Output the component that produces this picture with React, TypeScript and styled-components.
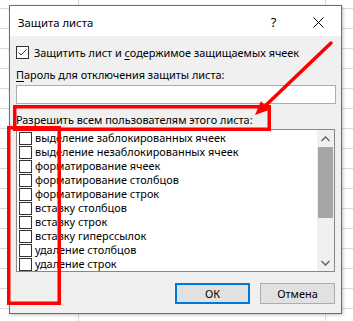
import React from "react";
import styled, { createGlobalStyle } from "styled-components";

const FONT = `"Noto Sans", "Open Sans", sans-serif`;

const GlobalStyle = createGlobalStyle`
  html, body { margin: 0; padding: 0; background: #fff; }
  body { font-family: ${FONT}; }
`;

const Page = styled.div`
  position: relative;
  width: 353px;
  height: 321px;
  overflow: hidden;
  box-sizing: border-box;
  padding: 5px 0 0 9px;
  background-color: #fff;
  background-image:
    linear-gradient(to right, transparent 78px, #d9d9d9 78px, #d9d9d9 79px, transparent 79px),
    linear-gradient(to right, transparent 325px, #d9d9d9 325px, #d9d9d9 326px, transparent 326px),
    repeating-linear-gradient(to bottom, transparent 0, transparent 8px, #d9d9d9 8px, #d9d9d9 9px, transparent 9px, transparent 20px);
  font-family: ${FONT};
  font-size: 10.9px;
  color: #000;
`;

const Dialog = styled.div`
  width: 333px;
  height: 309px;
  box-sizing: border-box;
  border: 1px solid #6f6f6f;
  box-shadow: 1px 1px 3px rgba(0, 0, 0, 0.25);
  background: #f0f0f0;
  display: flex;
  flex-direction: column;
`;

const TitleBar = styled.div`
  height: 30px;
  flex: none;
  background: #fff;
  display: flex;
  align-items: center;
  box-sizing: border-box;
  padding: 2px 0 0 8px;
`;

const Title = styled.div`
  flex: 1;
  font-size: 11.3px;
`;

const CaptionButton = styled.div`
  width: 45px;
  height: 100%;
  display: flex;
  align-items: center;
  justify-content: center;
  font-size: 13px;
  color: #000;
`;

const Body = styled.div`
  flex: 1;
  display: flex;
  flex-direction: column;
  padding: 0 5px 0 6px;
`;

const CheckRow = styled.label`
  display: flex;
  align-items: center;
  height: 13px;
  line-height: 13px;
  margin-top: 10px;
  gap: 5px;
  white-space: nowrap;
`;

const Box = styled.span`
  flex: none;
  width: 13px;
  height: 13px;
  box-sizing: border-box;
  border: 1px solid #333;
  background: #fff;
  display: flex;
  align-items: center;
  justify-content: center;
`;

const Label = styled.div<{ $top: number }>`
  height: 16px;
  line-height: 16px;
  margin-top: ${(p) => p.$top}px;
  white-space: nowrap;
`;

const U = styled.span`
  text-decoration: underline;
  text-underline-offset: 2px;
`;

const Input = styled.div`
  height: 19px;
  width: 320px;
  box-sizing: border-box;
  margin-top: 2px;
  border: 1px solid #abadb3;
  background: #fff;
`;

const List = styled.div`
  margin-top: 1px;
  width: 319px;
  height: 143px;
  box-sizing: border-box;
  border: 1px solid #828790;
  background: #fff;
  display: flex;
`;

const Rows = styled.div`
  flex: 1;
  padding-top: 1px;
  display: flex;
  flex-direction: column;
`;

const Row = styled.div`
  height: 14px;
  line-height: 14px;
  display: flex;
  align-items: center;
  padding-left: 2px;
  gap: 3px;
  white-space: nowrap;
`;

const Scrollbar = styled.div`
  width: 17px;
  flex: none;
  background: #f0f0f0;
  display: flex;
  flex-direction: column;
`;

const ScrollArrow = styled.div`
  height: 17px;
  flex: none;
  display: flex;
  align-items: center;
  justify-content: center;
`;

const Thumb = styled.div`
  height: 71px;
  flex: none;
  margin: 0 1px;
  background: #a6a6a6;
`;

const Track = styled.div`
  flex: 1;
`;

const Buttons = styled.div`
  margin-top: 11px;
  display: flex;
  justify-content: flex-end;
  gap: 10px;
  padding-right: 1px;
`;

const Button = styled.div<{ $default?: boolean }>`
  width: 75px;
  height: 21px;
  box-sizing: border-box;
  background: #e1e1e1;
  border: ${(p) => (p.$default ? "2px solid #0078d7" : "1px solid #adadad")};
  display: flex;
  align-items: center;
  justify-content: center;
  font-size: 10.9px;
`;

const Overlay = styled.svg`
  position: absolute;
  left: 0;
  top: 0;
  pointer-events: none;
`;

const items = [
  "выделение заблокированных ячеек",
  "выделение незаблокированных ячеек",
  "форматирование ячеек",
  "форматирование столбцов",
  "форматирование строк",
  "вставку столбцов",
  "вставку строк",
  "вставку гиперссылок",
  "удаление столбцов",
  "удаление строк",
];

export default function App() {
  return (
    <>
      <GlobalStyle />
      <Page>
        <Dialog>
          <TitleBar>
            <Title>Защита листа</Title>
            <CaptionButton>?</CaptionButton>
            <CaptionButton>
              <svg width="11" height="11" viewBox="0 0 11 11">
                <path d="M0.5 0.5 L10.5 10.5 M10.5 0.5 L0.5 10.5" stroke="#000" strokeWidth="1" />
              </svg>
            </CaptionButton>
          </TitleBar>
          <Body>
            <CheckRow>
              <Box>
                <svg width="11" height="11" viewBox="0 0 11 11">
                  <polyline points="1.5,5.5 4,8 9.5,2.5" fill="none" stroke="#333" strokeWidth="1" />
                </svg>
              </Box>
              <span>
                Защитить лист и <U>с</U>одержимое защищаемых ячеек
              </span>
            </CheckRow>
            <Label $top={8}>
              <U>П</U>ароль для отключения защиты листа:
            </Label>
            <Input />
            <Label $top={8}>
              Разре<U>ш</U>ить всем пользователям этого листа:
            </Label>
            <List>
              <Rows>
                {items.map((t) => (
                  <Row key={t}>
                    <Box />
                    <span>{t}</span>
                  </Row>
                ))}
              </Rows>
              <Scrollbar>
                <ScrollArrow>
                  <svg width="9" height="6" viewBox="0 0 9 6">
                    <polyline points="0.5,5 4.5,1 8.5,5" fill="none" stroke="#606060" strokeWidth="1.3" />
                  </svg>
                </ScrollArrow>
                <Thumb />
                <Track />
                <ScrollArrow>
                  <svg width="9" height="6" viewBox="0 0 9 6">
                    <polyline points="0.5,1 4.5,5 8.5,1" fill="none" stroke="#606060" strokeWidth="1.3" />
                  </svg>
                </ScrollArrow>
              </Scrollbar>
            </List>
            <Buttons>
              <Button $default>ОК</Button>
              <Button>Отмена</Button>
            </Buttons>
          </Body>
        </Dialog>
        <Overlay width="353" height="321" viewBox="0 0 353 321">
          <rect x="14.75" y="106.75" width="254.5" height="22.5" fill="none" stroke="#ff0000" strokeWidth="3.5" />
          <rect x="8.75" y="127.75" width="50.5" height="175.5" fill="none" stroke="#ff0000" strokeWidth="3.5" />
          <line x1="331" y1="43" x2="263" y2="108" stroke="#ff0000" strokeWidth="3.5" strokeLinecap="round" />
          <polygon points="255,115 269,110 261,101" fill="#ff0000" />
        </Overlay>
      </Page>
    </>
  );
}
